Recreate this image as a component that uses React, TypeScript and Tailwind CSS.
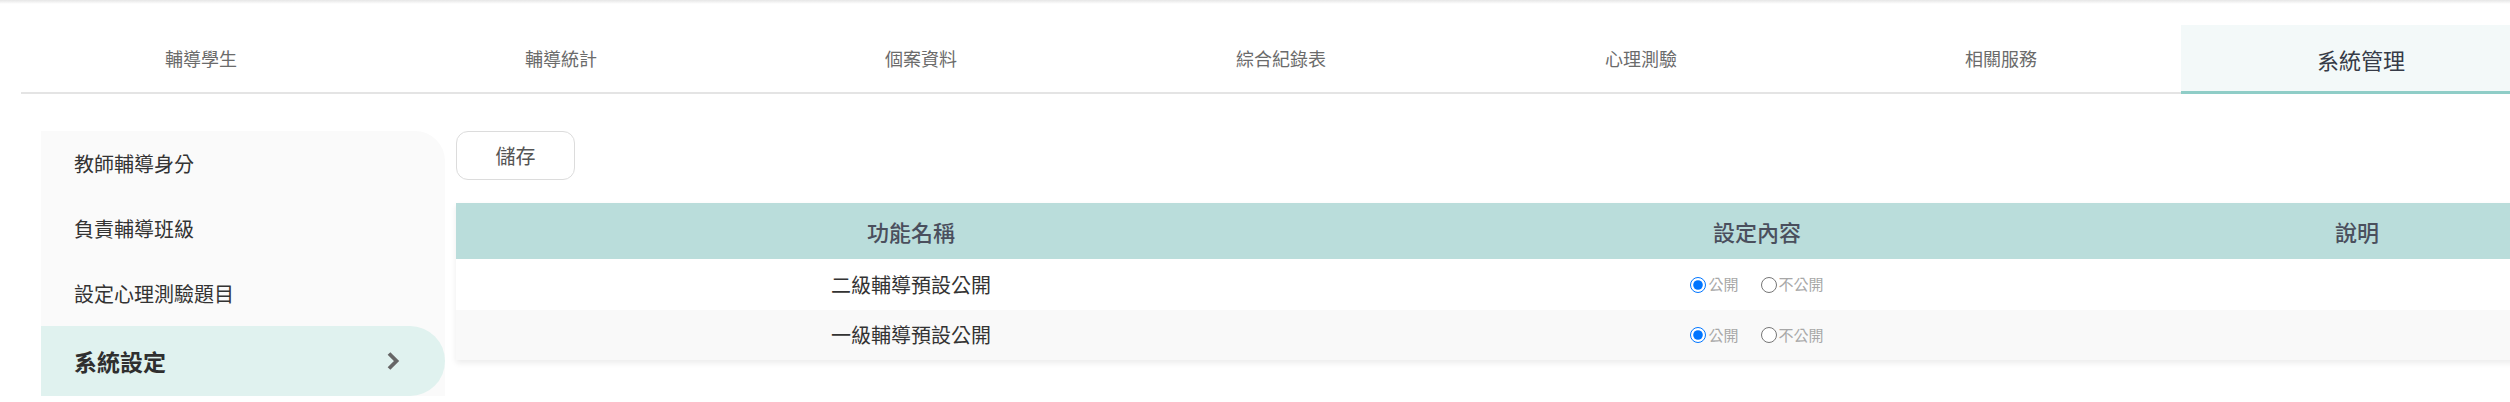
import { useState } from 'react';

const tabs = ['輔導學生', '輔導統計', '個案資料', '綜合紀錄表', '心理測驗', '相關服務', '系統管理'];
const menu = ['教師輔導身分', '負責輔導班級', '設定心理測驗題目'];

const rows = [
  { id: 'lv2', name: '二級輔導預設公開' },
  { id: 'lv1', name: '一級輔導預設公開' },
];

export default function App() {
  const [activeTab] = useState(6);
  const [values, setValues] = useState<Record<string, string>>({ lv2: 'public', lv1: 'public' });

  return (
    <div className="w-full h-[402px] overflow-hidden bg-white font-['Noto_Sans_CJK_TC','Noto_Sans',sans-serif]">
      {/* header shadow */}
      <div className="h-[4px] bg-gradient-to-b from-[#e6e6e6] to-white" />

      {/* Tabs */}
      <div className="pl-[21px] pt-[21px]">
        <div className="flex w-[2520px]">
          {tabs.map((t, i) =>
            i === activeTab ? (
              <div
                key={t}
                className="w-[360px] h-[69px] flex items-center justify-center bg-[#f3f9f9] border-b-[3px] border-[#8fcdc7] text-[22px] text-[#363b47] pt-[2px]"
              >
                {t}
              </div>
            ) : (
              <div
                key={t}
                className="w-[360px] h-[69px] flex items-center justify-center border-b-2 border-[#e4e4e4] text-[18px] text-[#6b6b6b]"
              >
                {t}
              </div>
            )
          )}
        </div>
      </div>

      {/* Body */}
      <div className="flex gap-[11px] pl-[41px] mt-[37px]">
        {/* Sidebar */}
        <div className="w-[404px] shrink-0 bg-[#fafafa] rounded-tr-[30px] flex flex-col">
          {menu.map((m) => (
            <div key={m} className="h-[65px] flex items-center pl-[33px] text-[20px] text-[#333]">
              {m}
            </div>
          ))}
          <div className="h-[70px] flex items-center justify-between pl-[33px] pr-[44px] bg-[#e0f2ef] rounded-r-full">
            <span className="text-[23px] font-bold text-[#2f2f2f]">系統設定</span>
            <svg width="16" height="22" viewBox="0 0 16 22" fill="none">
              <path d="M4 3.5 L11.5 11 L4 18.5" stroke="#666" strokeWidth="3.8" strokeLinecap="butt" />
            </svg>
          </div>
        </div>

        {/* Content */}
        <div className="flex flex-col">
          <button className="w-[119px] h-[49px] border border-[#dcdcdc] rounded-[12px] bg-white text-[20px] text-[#555]">
            儲存
          </button>

          <div className="mt-[23px] w-[2110px] shadow-[0_3px_6px_rgba(0,0,0,0.08)]">
            <div className="flex h-[56px] bg-[#badddb] text-[22px] font-medium text-[#4a4f5d]">
              <div className="w-[910px] flex items-center justify-center">功能名稱</div>
              <div className="w-[782px] flex items-center justify-center">設定內容</div>
              <div className="flex-1 flex items-center justify-center">說明</div>
            </div>
            {rows.map((r, idx) => (
              <div
                key={r.id}
                className={`flex ${idx === 0 ? 'h-[51px] bg-white' : 'h-[50px] bg-[#f9f9f9]'} text-[20px] text-[#333]`}
              >
                <div className="w-[910px] flex items-center justify-center">{r.name}</div>
                <div className="w-[782px] flex items-center justify-center gap-[22px] text-[15px] text-[#a8a8a8]">
                  <label className="flex items-center">
                    <input
                      type="radio"
                      name={r.id}
                      checked={values[r.id] === 'public'}
                      onChange={() => setValues({ ...values, [r.id]: 'public' })}
                      className="w-[16px] h-[16px] m-0 mr-[2px] accent-[#0075ff]"
                    />
                    公開
                  </label>
                  <label className="flex items-center">
                    <input
                      type="radio"
                      name={r.id}
                      checked={values[r.id] === 'private'}
                      onChange={() => setValues({ ...values, [r.id]: 'private' })}
                      className="w-[16px] h-[16px] m-0 mr-[2px] accent-[#0075ff]"
                    />
                    不公開
                  </label>
                </div>
                <div className="flex-1" />
              </div>
            ))}
          </div>
        </div>
      </div>
    </div>
  );
}
